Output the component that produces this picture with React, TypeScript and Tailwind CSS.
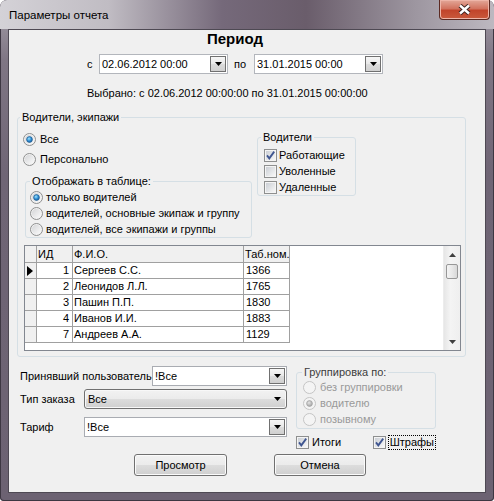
import React from 'react'

const rows = [
  { id: 1, name: 'Сергеев С.С.', tab: '1366' },
  { id: 2, name: 'Леонидов Л.Л.', tab: '1765' },
  { id: 3, name: 'Пашин П.П.', tab: '1830' },
  { id: 4, name: 'Иванов И.И.', tab: '1883' },
  { id: 7, name: 'Андреев А.А.', tab: '1129' },
]

function Tri({ up = false, color = '#000' }: { up?: boolean; color?: string }) {
  return (
    <svg width="7" height="4" viewBox="0 0 7 4" className="shrink-0">
      <path d={up ? 'M0 4h7L3.5 0z' : 'M0 0h7L3.5 4z'} fill={color} />
    </svg>
  )
}

function Radio({ checked = false, disabled = false }: { checked?: boolean; disabled?: boolean }) {
  return (
    <svg width="13" height="13" viewBox="0 0 13 13" className="shrink-0">
      <defs>
        <linearGradient id="rIn" x1="0" y1="0" x2="1" y2="1">
          <stop offset="0" stopColor="#d4d5d7" />
          <stop offset="1" stopColor="#fbfbfb" />
        </linearGradient>
        <radialGradient id="rDot" cx="0.4" cy="0.35" r="0.75">
          <stop offset="0" stopColor="#9ce4ff" />
          <stop offset="0.55" stopColor="#2b8bd2" />
          <stop offset="1" stopColor="#195891" />
        </radialGradient>
        <radialGradient id="rDotD" cx="0.4" cy="0.35" r="0.75">
          <stop offset="0" stopColor="#e4e4e4" />
          <stop offset="1" stopColor="#9c9c9c" />
        </radialGradient>
      </defs>
      <circle cx="6.5" cy="6.5" r="6" fill={disabled ? '#f4f4f4' : '#f2f2f2'} stroke={disabled ? '#c4c4c4' : '#8e8f8f'} />
      <circle cx="6.5" cy="6.5" r="4.7" fill={disabled ? '#f4f4f4' : 'url(#rIn)'} />
      {checked && (
        <circle
          cx="6.5"
          cy="6.5"
          r="2.9"
          fill={disabled ? 'url(#rDotD)' : 'url(#rDot)'}
          stroke={disabled ? '#a0a0a0' : '#1f5b90'}
          strokeWidth="0.7"
        />
      )}
    </svg>
  )
}

function Check({ checked = false }: { checked?: boolean }) {
  return (
    <svg width="13" height="13" viewBox="0 0 13 13" className="shrink-0">
      <defs>
        <linearGradient id="cIn" x1="0" y1="0" x2="1" y2="1">
          <stop offset="0" stopColor="#cbcfd5" />
          <stop offset="1" stopColor="#f7f7f7" />
        </linearGradient>
      </defs>
      <rect x="0.5" y="0.5" width="12" height="12" fill="#f4f4f4" stroke="#8e8f8f" />
      <rect x="2" y="2" width="9" height="9" fill="url(#cIn)" />
      {checked && (
        <path d="M3 6.4 L5.3 9.4 L10.2 2.6" fill="none" stroke="#3f5590" strokeWidth="1.8" />
      )}
    </svg>
  )
}

function DropBtn() {
  return (
    <div className="flex h-[16px] w-[16px] shrink-0 items-center justify-center border border-[#707070] bg-[linear-gradient(#f6f6f6,#e8e8e8_50%,#dcdcdc_50%,#d0d0d0)]">
      <Tri />
    </div>
  )
}

function ComboEdit({ text, w }: { text: string; w: string }) {
  return (
    <div className={`${w} flex h-[20px] items-center border border-[#a9acb2] bg-white pr-[1px]`}>
      <span className="flex-1 pl-[2px]">{text}</span>
      <DropBtn />
    </div>
  )
}

function RadioRow({ label, checked, disabled, h = 'h-[16px]', gap = 'gap-[3px]' }: { label: string; checked?: boolean; disabled?: boolean; h?: string; gap?: string }) {
  return (
    <div className={`flex ${h} items-center ${gap} ${disabled ? 'text-[#9a9a9a]' : ''}`}>
      <Radio checked={checked} disabled={disabled} />
      <span>{label}</span>
    </div>
  )
}

function CheckRow({ label, checked }: { label: string; checked?: boolean }) {
  return (
    <div className="flex h-[16px] items-center gap-[2px]">
      <Check checked={checked} />
      <span>{label}</span>
    </div>
  )
}

function Button({ label, w }: { label: string; w: string }) {
  return (
    <div className={`${w} flex h-[22px] items-center justify-center rounded-[3px] border border-[#707070] bg-[linear-gradient(#f2f2f2,#ebebeb_50%,#dddddd_50%,#cfcfcf)] shadow-[inset_0_0_0_1px_#fbfbfb]`}>
      {label}
    </div>
  )
}

export default function App() {
  return (
    <div className="flex h-[501px] w-[494px] flex-col rounded-t-[7px] rounded-b-[4px] bg-[linear-gradient(180deg,#a59fa9_0%,#7f7684_12%,#6f6575_35%,#6c6272_100%)] font-['Liberation_Sans',Arial,sans-serif] text-black shadow-[inset_0_0_0_1px_#3d3742]">
      {/* title bar */}
      <div className="flex h-[29px] items-start justify-between rounded-t-[7px] bg-[linear-gradient(90deg,#d4d2d7_0%,#c0bcc3_22%,#75697a_45%,#6a5d6b_62%,#9d96a0_84%,#bdb8c0_100%)]">
        <span className="pl-[9px] pt-[8px] text-[11.5px] leading-[14px]">Параметры отчета</span>
        <div className="mr-[4px] flex h-[20px] w-[51px] items-center justify-center rounded-b-[4px] border border-t-0 border-[#5c2a22] bg-[linear-gradient(#e3a899,#d2735f_45%,#c1442b_55%,#c95a3c)] shadow-[inset_0_0_0_1px_#eeb5a8]">
          <svg width="15" height="11" viewBox="0 0 15 11">
            <path d="M3 1.5 L12 9.5 M12 1.5 L3 9.5" stroke="#3a2320" strokeWidth="4.4" />
            <path d="M3 1.5 L12 9.5 M12 1.5 L3 9.5" stroke="#ffffff" strokeWidth="2.4" />
          </svg>
        </div>
      </div>

      {/* client area */}
      <div className="mx-[8px] flex h-[464px] flex-col border border-[#4e4953] bg-[#f0f0f0] text-[11px] leading-[14px]">
        <div className="pl-[198px] text-[15px] font-bold leading-[17px]">Период</div>

        <div className="mt-[7px] flex h-[20px] items-center pl-[78px]">
          <span className="w-[12px]">с</span>
          <div className="flex h-[20px] w-[129px] items-center border border-[#b3b6bc] bg-white pr-[1px]">
            <span className="flex-1 pl-[2px]">02.06.2012 00:00</span>
            <DropBtn />
          </div>
          <span className="w-[26px] pl-[6px]">по</span>
          <div className="flex h-[20px] w-[129px] items-center border border-[#b3b6bc] bg-white pr-[1px]">
            <span className="flex-1 pl-[2px]">31.01.2015 00:00</span>
            <DropBtn />
          </div>
        </div>

        <div className="mt-[12px] pl-[78px]">Выбрано: с 02.06.2012 00:00:00 по 31.01.2015 00:00:00</div>

        {/* Водители, экипажи */}
        <fieldset className="mt-[10px] ml-[8px] w-[449px] rounded-[3px] border border-[#d5dfe5]">
          <legend className="ml-[2px] px-[2px]">Водители, экипажи</legend>
          <div className="flex pt-[5px] pl-[5px]">
            <div className="flex w-[228px] flex-col">
              <RadioRow label="Все" checked h="h-[20px]" gap="gap-[4px]" />
              <RadioRow label="Персонально" h="h-[20px]" gap="gap-[4px]" />
              <fieldset className="mt-[5px] ml-[2px] w-[227px] rounded-[3px] border border-[#d5dfe5]">
                <legend className="ml-[4px] px-[2px]">Отображать в таблице:</legend>
                <div className="flex flex-col pt-[1px] pl-[4px]">
                  <RadioRow label="только водителей" checked />
                  <RadioRow label="водителей, основные экипаж и группу" />
                  <RadioRow label="водителей, все экипажи и группы" />
                </div>
              </fieldset>
            </div>
            <fieldset className="mt-[1px] ml-[6px] h-[66px] w-[99px] rounded-[3px] border border-[#d5dfe5]">
              <legend className="ml-[3px] px-[2px]">Водители</legend>
              <div className="flex flex-col pt-[3px] pl-[6px]">
                <CheckRow label="Работающие" checked />
                <CheckRow label="Уволенные" />
                <CheckRow label="Удаленные" />
              </div>
            </fieldset>
          </div>

          {/* grid */}
          <div className="mt-[7px] mb-[5px] ml-[6px] flex h-[106px] w-[437px] border border-[#828790] bg-white">
            <div className="flex flex-1 flex-col">
              <div className="flex h-[17px]">
                <div className="w-[12px] border-r border-b border-[#a0a0a0] bg-[#f0f0f0]" />
                <div className="w-[36px] border-r border-b border-[#a0a0a0] bg-[#f0f0f0] pl-[1px] leading-[16px]">ИД</div>
                <div className="w-[171px] border-r border-b border-[#a0a0a0] bg-[#f0f0f0] pl-[1px] leading-[16px]">Ф.И.О.</div>
                <div className="w-[46px] border-r border-b border-[#a0a0a0] bg-[#f0f0f0] pl-[1px] leading-[16px]">Таб.ном.</div>
              </div>
              {rows.map((r, i) => (
                <div key={r.id} className="flex h-[16px] leading-[15px]">
                  <div className="flex w-[12px] items-center border-r border-b border-[#a0a0a0] bg-[#f0f0f0] pl-[2px]">
                    {i === 0 && (
                      <svg width="6" height="10" viewBox="0 0 6 10">
                        <path d="M0 0 L6 5 L0 10z" fill="#000" />
                      </svg>
                    )}
                  </div>
                  <div className="w-[36px] border-r border-b border-[#a0a0a0] pr-[3px] text-right">{r.id}</div>
                  <div className="w-[171px] border-r border-b border-[#a0a0a0] pl-[1px]">{r.name}</div>
                  <div className="w-[46px] border-r border-b border-[#a0a0a0] pl-[2px]">{r.tab}</div>
                </div>
              ))}
            </div>
            {/* scrollbar */}
            <div className="flex w-[17px] flex-col border-l border-[#ececec] bg-[linear-gradient(90deg,#e6e6e6,#f4f4f4_40%,#efefef)]">
              <div className="flex h-[17px] items-center justify-center">
                <Tri up color="#404040" />
              </div>
              <div className="mx-[2px] mt-[1px] h-[15px] rounded-[2px] border border-[#979797] bg-[linear-gradient(90deg,#f4f4f4,#e8e8e8_50%,#d8d8d8)]" />
              <div className="flex-1" />
              <div className="flex h-[17px] items-center justify-center">
                <Tri color="#404040" />
              </div>
            </div>
          </div>
        </fieldset>

        {/* bottom */}
        <div className="mt-[8px] flex pl-[11px]">
          <div className="flex w-[267px] flex-col">
            <div className="mt-[1px] flex h-[20px] items-center">
              <span className="w-[132px]">Принявший пользователь</span>
              <ComboEdit text="!Все" w="w-[135px]" />
            </div>
            <div className="mt-[3px] flex h-[20px] items-center">
              <span className="w-[64px]">Тип заказа</span>
              <div className="flex h-[20px] w-[203px] items-center rounded-[3px] border border-[#707070] bg-[linear-gradient(#f2f2f2,#ebebeb_50%,#dddddd_50%,#cfcfcf)] pr-[5px] pl-[3px] shadow-[inset_0_0_0_1px_#f8f8f8]">
                <span className="flex-1">Все</span>
                <Tri />
              </div>
            </div>
            <div className="mt-[8px] flex h-[20px] items-center">
              <span className="w-[64px]">Тариф</span>
              <ComboEdit text="!Все" w="w-[203px]" />
            </div>
          </div>

          <div className="ml-[9px] flex w-[140px] flex-col">
            <fieldset className="rounded-[3px] border border-[#d5dfe5]">
              <legend className="ml-[5px] px-[2px] text-[#3c3c3c]">Группировка по:</legend>
              <div className="flex flex-col pb-[1px] pl-[6px]">
                <RadioRow label="без группировки" disabled gap="gap-[4px]" />
                <RadioRow label="водителю" checked disabled gap="gap-[4px]" />
                <RadioRow label="позывному" disabled gap="gap-[4px]" />
              </div>
            </fieldset>
            <div className="mt-[5px] flex h-[16px] items-center">
              <div className="flex w-[80px] items-center gap-[3px]">
                <Check checked />
                <span>Итоги</span>
              </div>
              <div className="flex items-center gap-[2px]">
                <Check checked />
                <span className="border border-dotted border-black px-[1px] leading-[13px]">Штрафы</span>
              </div>
            </div>
          </div>
        </div>

        <div className="mt-[4px] flex gap-[47px] pl-[125px]">
          <Button label="Просмотр" w="w-[93px]" />
          <Button label="Отмена" w="w-[92px]" />
        </div>
      </div>
    </div>
  )
}
